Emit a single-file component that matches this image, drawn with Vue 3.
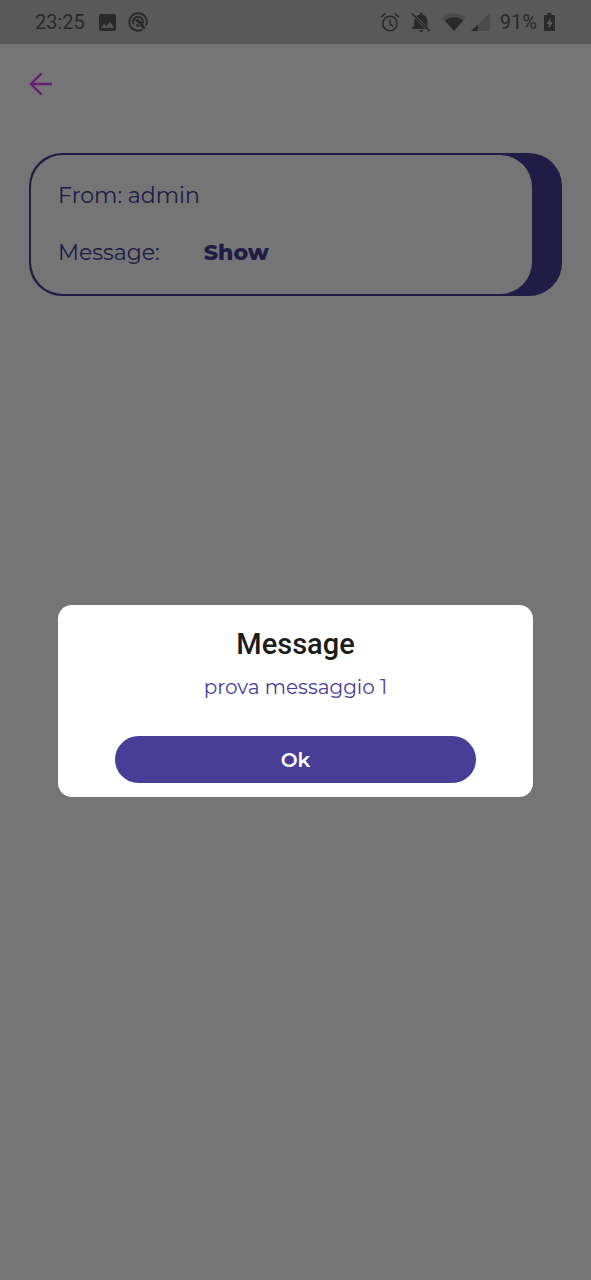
<script setup>
import { ref } from 'vue'

const open = ref(true)
</script>

<template>
  <div class="screen">
    <header class="status">
      <div class="group">
        <span class="time">23:25</span>
        <svg class="image" width="17" height="17" viewBox="3 3 18 18" aria-hidden="true">
          <path d="M21 19V5c0-1.100-.9-2-2-2H5c-1.100 0-2 .9-2 2v14c0 1.100.9 2 2 2h14c1.100 0 2-.9 2-2zM5 17.500l3.500-4 2.300 2.700 3.700-5 4.500 6.300z" fill-rule="evenodd" />
        </svg>
        <svg class="ring" width="20" height="20" viewBox="0 0 20 20" fill="none" stroke="currentColor" aria-hidden="true">
          <path d="M14.400 17.500A8.700 8.700 0 1 1 17.900 13.700" stroke-width="2" />
          <path d="M5.600 12.200A5 5 0 1 1 14.800 11.200" stroke-width="2" />
          <path d="M6.500 8.500L9.500 6.500L13 9l4.500 7-1.800 1.500L10.500 11.500z" fill="currentColor" stroke="none" />
          <path d="M7.200 13.800a5 5 0 0 0 5 .6L9.500 11.500z" fill="currentColor" stroke="none" />
        </svg>
      </div>
      <div class="group right">
        <svg class="alarm" width="20" height="20" viewBox="0 0 20 20" fill="none" stroke="currentColor" stroke-width="1.600" aria-hidden="true">
          <circle cx="10" cy="11.500" r="7.200" />
          <path d="M1 5.200L5.400 1.500M19 5.200L14.600 1.500M10 7v5l3.300 2.300" />
        </svg>
        <svg class="bell" width="20" height="20" viewBox="0 0 20 20" aria-hidden="true">
          <path d="M5.300 3.700l11.200 11.200V9c0-3.200-1.800-5.500-4.800-6.200V2a1.500 1.500 0 0 0-3 0v.8c-1.300.2-2.500.5-3.400.9zM3.800 6.200C3.300 7 3.200 8 3.200 9v5l-2.200 2v1h13.500zM8.200 18h4a2 2 0 0 1-4 0z" />
          <path d="M1 1.500L19 19.300" fill="none" stroke="currentColor" stroke-width="1.700" />
        </svg>
        <svg class="wifi" width="24" height="18" viewBox="0 0 24 18" aria-hidden="true">
          <path d="M0 4.500C7-1.200 17-1.200 24 4.500L12 18z" opacity=".3" />
          <path d="M2.800 7.500c5.500-4.400 12.900-4.400 18.400 0L12 18z" />
        </svg>
        <svg class="signal" width="19" height="18" viewBox="0 0 19 18" aria-hidden="true">
          <path d="M0 18L19 0v18z" opacity=".3" />
          <path d="M0 18l7-6.600V18z" />
        </svg>
        <span>91%</span>
        <svg class="battery" width="11" height="18" viewBox="0 0 11 18" aria-hidden="true">
          <path d="M3.500 0h4v2H10c.6 0 1 .4 1 1v14c0 .6-.4 1-1 1H1c-.6 0-1-.4-1-1V3c0-.6.400-1 1-1h2.500zM6.500 4.500L2.500 11h2.300v4.500l4-6.500H6.500z" fill-rule="evenodd" />
        </svg>
      </div>
    </header>

    <main>
      <button class="back" type="button" aria-label="Back">
        <svg width="24" height="24" viewBox="0 0 24 24" fill="none" stroke="currentColor" stroke-width="2.400" aria-hidden="true">
          <path d="M23 12H2M12.500 1.500L2 12l10.500 10.500" />
        </svg>
      </button>

      <section class="card">
        <div class="body">
          <p>From: admin</p>
          <p class="row">
            <span>Message:</span>
            <button class="show" type="button" @click="open = true">Show</button>
          </p>
        </div>
      </section>
    </main>

    <div v-if="open" class="scrim">
      <div class="dialog" role="dialog" aria-modal="true" aria-labelledby="dialog-title">
        <h2 id="dialog-title">Message</h2>
        <p>prova messaggio 1</p>
        <button class="ok" type="button" @click="open = false">Ok</button>
      </div>
    </div>
  </div>
</template>

<style>
body {
  margin: 0;
}
</style>

<style scoped>
.screen {
  min-height: 100vh;
  background: #fefefe;
  color: #483d97;
  font-family: Montserrat, Inter, "Liberation Sans", sans-serif;
}

svg {
  display: block;
  fill: currentColor;
}

svg[fill="none"] {
  fill: none;
}

button {
  margin: 0;
  padding: 0;
  border: 0;
  background: none;
  font: inherit;
  color: inherit;
  cursor: pointer;
}

h2,
p {
  margin: 0;
}

.status {
  display: flex;
  justify-content: space-between;
  align-items: center;
  box-sizing: border-box;
  height: 44px;
  padding: 0 36px 0 35px;
  background: #c3c3c3;
  color: #5c5c5c;
  font: 20px/24px Roboto, sans-serif;
}

.group {
  display: flex;
  align-items: center;
}

.image {
  margin-left: 14px;
}

.ring {
  margin-left: 12px;
}

.bell {
  margin-left: 11px;
}

.wifi {
  margin-left: 11px;
}

.signal {
  margin: 0 10px 0 5px;
}

.battery {
  margin-left: 7px;
}

main {
  padding: 28px 29px;
}

.back {
  display: block;
  color: #e040fb;
}

.card {
  margin-top: 57px;
  padding: 2px 30px 2px 2px;
  border-radius: 33px;
  background: #483d97;
}

.body {
  display: flex;
  flex-direction: column;
  gap: 29px;
  padding: 27px;
  border-radius: 32px;
  background: #fefefe;
  font-size: 22px;
  line-height: 28px;
}

.row {
  display: flex;
  gap: 44px;
}

.show {
  font-weight: 800;
}

.scrim {
  position: fixed;
  inset: 0;
  display: flex;
  align-items: center;
  justify-content: center;
  padding: 122px 58px 0;
  background: rgb(0 0 0 / 54%);
}

.dialog {
  box-sizing: border-box;
  width: 100%;
  padding: 22px 57px 14px;
  border-radius: 14px;
  background: #fff;
  text-align: center;
}

.dialog h2 {
  color: #1c1c1c;
  font: 500 29px/34px Roboto, sans-serif;
}

.dialog p {
  margin-top: 13px;
  font-size: 20px;
  line-height: 26px;
}

.ok {
  display: block;
  width: 100%;
  height: 47px;
  margin-top: 36px;
  border-radius: 24px;
  background: #483d97;
  color: #fff;
  font-size: 20px;
  font-weight: 600;
}
</style>
